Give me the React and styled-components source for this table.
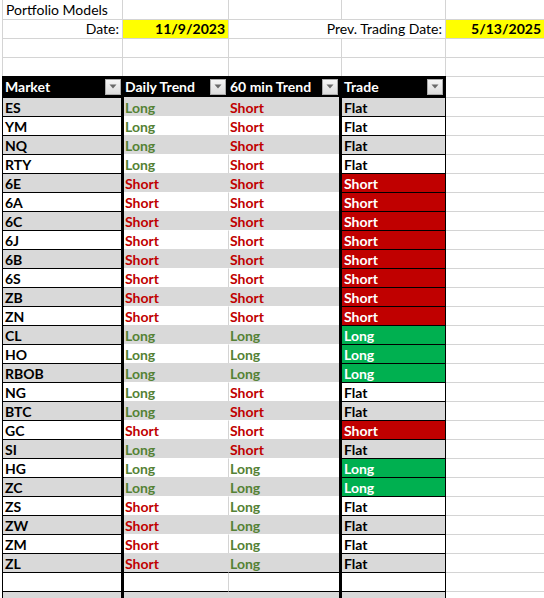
import React from "react";
import styled, { createGlobalStyle } from "styled-components";

const GRAY = "#d9d9d9";
const WHITE = "#ffffff";
const GRID = "#d4d4d4";
const GREEN_TEXT = "#548235";
const RED_TEXT = "#c00000";

const markets = [
  ["ES", "Long", "Short", "Flat"],
  ["YM", "Long", "Short", "Flat"],
  ["NQ", "Long", "Short", "Flat"],
  ["RTY", "Long", "Short", "Flat"],
  ["6E", "Short", "Short", "Short"],
  ["6A", "Short", "Short", "Short"],
  ["6C", "Short", "Short", "Short"],
  ["6J", "Short", "Short", "Short"],
  ["6B", "Short", "Short", "Short"],
  ["6S", "Short", "Short", "Short"],
  ["ZB", "Short", "Short", "Short"],
  ["ZN", "Short", "Short", "Short"],
  ["CL", "Long", "Long", "Long"],
  ["HO", "Long", "Long", "Long"],
  ["RBOB", "Long", "Long", "Long"],
  ["NG", "Long", "Short", "Flat"],
  ["BTC", "Long", "Short", "Flat"],
  ["GC", "Short", "Short", "Short"],
  ["SI", "Long", "Short", "Flat"],
  ["HG", "Long", "Long", "Long"],
  ["ZC", "Long", "Long", "Long"],
  ["ZS", "Short", "Long", "Flat"],
  ["ZW", "Short", "Long", "Flat"],
  ["ZM", "Short", "Long", "Flat"],
  ["ZL", "Short", "Long", "Flat"],
];

const GlobalStyle = createGlobalStyle`
  body {
    margin: 0;
    background: #fff;
    font-family: Lato, "Liberation Sans", sans-serif;
  }
`;

const Sheet = styled.div`
  width: 544px;
  height: 598px;
  overflow: hidden;
  padding-left: 2px;
  box-sizing: border-box;
  font-size: 14px;
  color: #000;
`;

// rows above the table
const TopRow = styled.div`
  display: grid;
  grid-template-columns: 120px 106px 113px 104px 99px;
  height: 19px;
  box-sizing: border-box;
  border-top: ${(p) => (p.$first ? "none" : `1px solid ${GRID}`)};
`;

const TopCell = styled.div`
  box-sizing: border-box;
  display: flex;
  align-items: flex-end;
  justify-content: ${(p) => (p.$right ? "flex-end" : "flex-start")};
  padding: 0 3px 1px 3px;
  white-space: nowrap;
  line-height: 17px;
  border-left: ${(p) => (p.$noLine ? "none" : `1px solid ${GRID}`)};
  background: ${(p) => p.$fill || "transparent"};
  font-weight: ${(p) => (p.$bold ? 700 : 400)};
`;

// table
const TableRow = styled.div`
  display: grid;
  grid-template-columns: 122px 104px 111px 107px 98px;
  height: ${(p) => (p.$header ? "21px" : "19px")};
`;

const HeaderCell = styled.div`
  box-sizing: border-box;
  background: #000;
  color: #fff;
  font-weight: 700;
  display: flex;
  align-items: center;
  justify-content: space-between;
  padding: 0 ${(p) => p.$pr}px 0 ${(p) => p.$pl}px;
  white-space: nowrap;
`;

const FilterButton = styled.span`
  width: 16px;
  height: 16px;
  box-sizing: border-box;
  border: 1px solid #ababab;
  background: linear-gradient(#f6f6f6, #dcdcdc);
  display: flex;
  align-items: center;
  justify-content: center;
  flex-shrink: 0;
`;

const MarketCell = styled.div`
  box-sizing: border-box;
  background: ${(p) => p.$fill};
  border-top: 1px solid #000;
  border-left: 1px solid #000;
  border-right: 3px solid #000;
  padding-left: 2px;
  font-weight: 700;
  line-height: 19px;
`;

const TrendCell = styled.div`
  box-sizing: border-box;
  background: ${(p) => p.$fill};
  border-top: 1px solid ${(p) => (p.$line ? "#000" : p.$fill)};
  border-left: ${(p) =>
    p.$grid ? `1px solid ${p.$fill === WHITE ? GRID : p.$fill}` : "none"};
  padding-left: 1px;
  font-weight: 700;
  line-height: 19px;
  color: ${(p) => (p.$value === "Long" ? GREEN_TEXT : RED_TEXT)};
`;

const tradeFill = { Long: "#00b050", Short: "#c00000" };

const TradeCell = styled.div`
  box-sizing: border-box;
  background: ${(p) => tradeFill[p.$value] || p.$fill};
  color: ${(p) => (tradeFill[p.$value] ? "#fff" : "#000")};
  border-top: 1px solid #000;
  border-left: 3px solid #000;
  border-right: 1px solid #000;
  padding-left: 2px;
  font-weight: 700;
  line-height: 19px;
`;

const EmptyCell = styled.div`
  box-sizing: border-box;
  border-top: 1px solid ${GRID};
`;

const Filter = () => (
  <FilterButton>
    <svg width="8" height="5" viewBox="0 0 8 5">
      <path d="M0.5 0.5h7L4 4.5z" fill="#6a6a6a" />
    </svg>
  </FilterButton>
);

const App = () => {
  const blanks = [WHITE, GRAY];
  return (
    <>
      <GlobalStyle />
      <Sheet>
        <TopRow $first>
          <TopCell>Portfolio Models</TopCell>
          <TopCell />
          <TopCell />
          <TopCell />
          <TopCell />
        </TopRow>
        <TopRow>
          <TopCell $right>Date:</TopCell>
          <TopCell $right $bold $fill="#ffff00">11/9/2023</TopCell>
          <TopCell />
          <TopCell $right $noLine>Prev. Trading Date:</TopCell>
          <TopCell $right $bold $fill="#ffff00">5/13/2025</TopCell>
        </TopRow>
        {[0, 1].map((i) => (
          <TopRow key={i}>
            <TopCell />
            <TopCell />
            <TopCell />
            <TopCell />
            <TopCell />
          </TopRow>
        ))}

        <TableRow $header>
          <HeaderCell $pl={3} $pr={3}>Market<Filter /></HeaderCell>
          <HeaderCell $pl={1} $pr={2}>Daily Trend<Filter /></HeaderCell>
          <HeaderCell $pl={2} $pr={1}>60 min Trend<Filter /></HeaderCell>
          <HeaderCell $pl={5} $pr={3}>Trade<Filter /></HeaderCell>
          <EmptyCell />
        </TableRow>

        {markets.map(([name, daily, hourly, trade], i) => {
          const fill = i % 2 === 0 ? GRAY : WHITE;
          return (
            <TableRow key={name}>
              <MarketCell $fill={fill}>{name}</MarketCell>
              <TrendCell $fill={fill} $value={daily}>{daily}</TrendCell>
              <TrendCell $fill={fill} $value={hourly} $grid>{hourly}</TrendCell>
              <TradeCell $fill={fill} $value={trade}>{trade}</TradeCell>
              <EmptyCell />
            </TableRow>
          );
        })}

        {blanks.map((fill) => (
          <TableRow key={fill}>
            <MarketCell $fill={fill} />
            <TrendCell $fill={fill} $line />
            <TrendCell $fill={fill} $line $grid />
            <TradeCell $fill={fill} />
            <EmptyCell />
          </TableRow>
        ))}
      </Sheet>
    </>
  );
};

export default App;
